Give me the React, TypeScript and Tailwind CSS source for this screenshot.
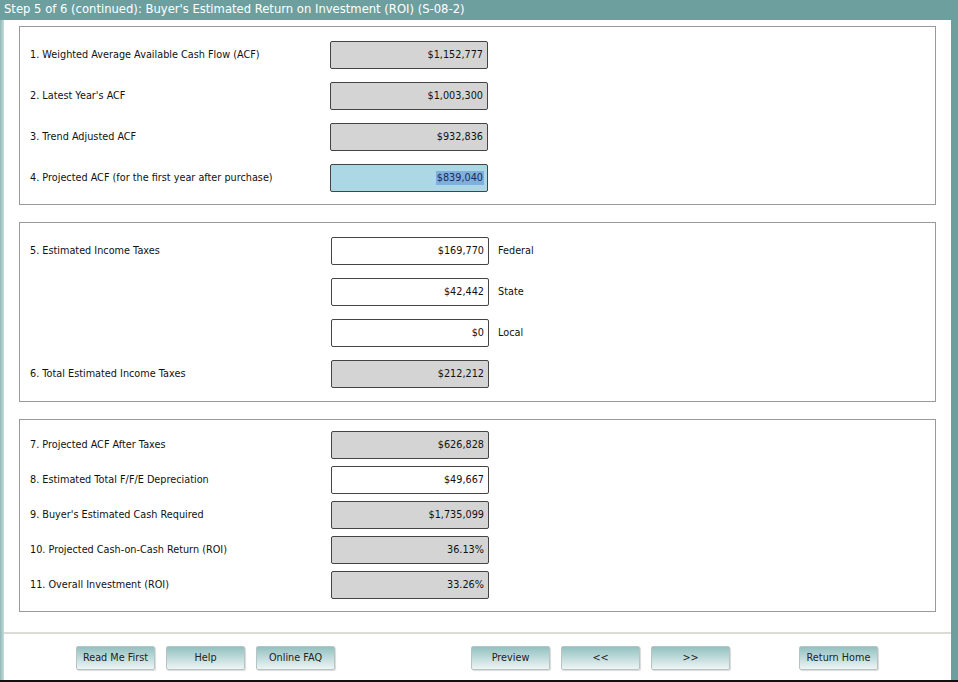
import React from 'react';

type Row = { label: string; value: string; kind: 'gray' | 'white' | 'blue'; side?: string };

const section1: Row[] = [
  { label: '1. Weighted Average Available Cash Flow (ACF)', value: '$1,152,777', kind: 'gray' },
  { label: "2. Latest Year's ACF", value: '$1,003,300', kind: 'gray' },
  { label: '3. Trend Adjusted ACF', value: '$932,836', kind: 'gray' },
  { label: '4. Projected ACF (for the first year after purchase)', value: '$839,040', kind: 'blue' },
];

const section2: Row[] = [
  { label: '5. Estimated Income Taxes', value: '$169,770', kind: 'white', side: 'Federal' },
  { label: '', value: '$42,442', kind: 'white', side: 'State' },
  { label: '', value: '$0', kind: 'white', side: 'Local' },
  { label: '6. Total Estimated Income Taxes', value: '$212,212', kind: 'gray' },
];

const section3: Row[] = [
  { label: '7. Projected ACF After Taxes', value: '$626,828', kind: 'gray' },
  { label: '8. Estimated Total F/F/E Depreciation', value: '$49,667', kind: 'white' },
  { label: "9. Buyer's Estimated Cash Required", value: '$1,735,099', kind: 'gray' },
  { label: '10. Projected Cash-on-Cash Return (ROI)', value: '36.13%', kind: 'gray' },
  { label: '11. Overall Investment (ROI)', value: '33.26%', kind: 'gray' },
];

function Field({ row }: { row: Row }) {
  const bg =
    row.kind === 'gray' ? 'bg-[#d4d4d4]' : row.kind === 'blue' ? 'bg-[#acd8e6]' : 'bg-white';
  return (
    <div className={`w-[158px] h-[28px] rounded-[2px] border border-[#444] ${bg} flex items-center justify-end pr-[3px] text-[9.7px] text-[#111]`}>
      {row.kind === 'blue' ? (
        <span className="bg-[#7fb0dc] text-[#1a2a5a] px-[1px]">{row.value}</span>
      ) : (
        <span className="px-[1px]">{row.value}</span>
      )}
    </div>
  );
}

function Section({ rows, gap, pad, offset }: { rows: Row[]; gap: string; pad: string; offset: string }) {
  return (
    <div className={`border border-[#9a9a9a] pl-[10px] ${pad} flex flex-col ${gap}`}>
      {rows.map((row, i) => (
        <div key={i} className="flex items-center h-[28px]">
          <div className={`${offset} shrink-0 text-[9.7px] text-[#111]`}>{row.label}</div>
          <Field row={row} />
          {row.side && <div className="ml-[9px] text-[9.7px] text-[#111]">{row.side}</div>}
        </div>
      ))}
    </div>
  );
}

const buttons = [
  { label: 'Read Me First', ml: 'ml-[72px]' },
  { label: 'Help', ml: 'ml-[11px]' },
  { label: 'Online FAQ', ml: 'ml-[11px]' },
  { label: 'Preview', ml: 'ml-[136px]' },
  { label: '<<', ml: 'ml-[11px]' },
  { label: '>>', ml: 'ml-[11px]' },
  { label: 'Return Home', ml: 'ml-[69px]' },
];

export default function App() {
  return (
    <div
      className="w-[958px] h-[682px] bg-[#6e9f9f] flex flex-col overflow-hidden"
      style={{ fontFamily: '"DejaVu Sans", Verdana, sans-serif' }}
    >
      {/* title bar */}
      <div className="h-[20px] shrink-0 flex items-center pl-[4px] text-white text-[11.6px]">
        Step 5 of 6 (continued): Buyer's Estimated Return on Investment (ROI) (S-08-2)
      </div>

      <div className="flex flex-1 min-h-0">
        <div className="w-[4px] shrink-0 bg-gradient-to-r from-[#8fb7b7] to-[#c9dddd]" />
        <div className="flex-1 bg-white flex flex-col">
          <div className="pt-[6px] px-[15px] flex flex-col gap-[17px]">
            <Section rows={section1} gap="gap-[13px]" pad="pt-[14px] pb-[12px]" offset="w-[300px]" />
            <Section rows={section2} gap="gap-[13px]" pad="pt-[14px] pb-[13px]" offset="w-[301px]" />
            <Section rows={section3} gap="gap-[7px]" pad="pt-[11px] pb-[12px]" offset="w-[301px]" />
          </div>

          <div className="mt-[20px] h-[2px] bg-[#dcdcd6]" />

          <div className="flex items-center pt-[12px]">
            {buttons.map((b) => (
              <button
                key={b.label}
                className={`${b.ml} w-[79px] h-[24px] rounded-[2px] border border-[#b8c4c4] bg-gradient-to-b from-[#93c1c1] to-[#eef5f5] text-[9.7px] text-[#222] shadow-[1px_1px_1px_rgba(0,0,0,0.15)]`}
              >
                {b.label}
              </button>
            ))}
          </div>
        </div>
        <div className="w-[7px] shrink-0 bg-[#6e9f9f]" />
      </div>
      <div className="h-[2px] shrink-0 bg-[#111]" />
    </div>
  );
}
